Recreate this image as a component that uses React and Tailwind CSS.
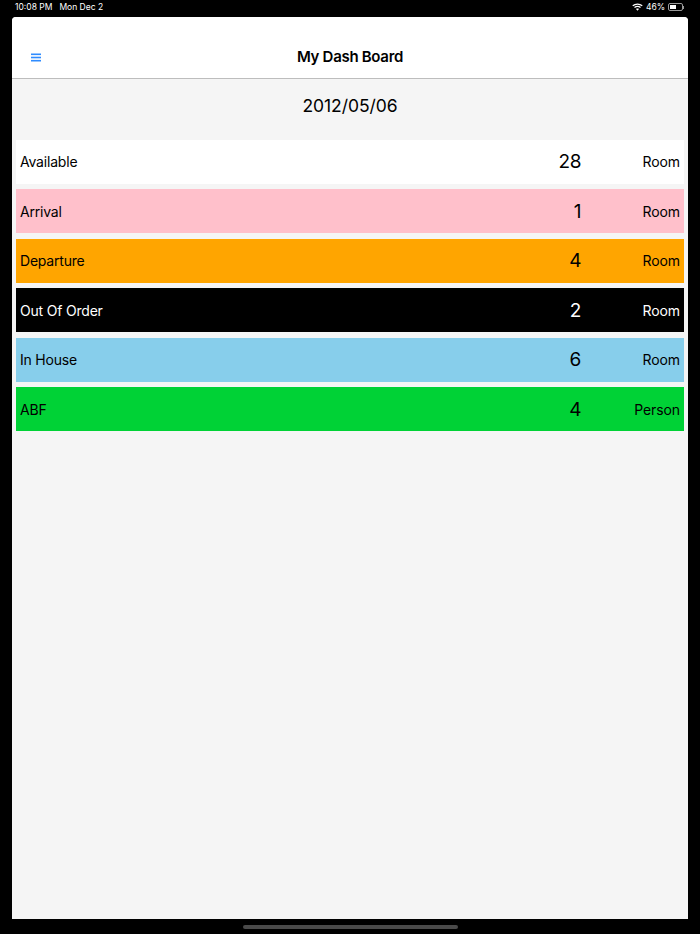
import React from 'react';

const rows = [
  { label: 'Available', count: 28, unit: 'Room', cls: 'bg-white text-black' },
  { label: 'Arrival', count: 1, unit: 'Room', cls: 'bg-[#ffc0cb] text-black' },
  { label: 'Departure', count: 4, unit: 'Room', cls: 'bg-[#ffa500] text-black' },
  { label: 'Out Of Order', count: 2, unit: 'Room', cls: 'bg-black text-white' },
  { label: 'In House', count: 6, unit: 'Room', cls: 'bg-[#87ceeb] text-black' },
  { label: 'ABF', count: 4, unit: 'Person', cls: 'bg-[#00d236] text-black' },
];

const StatusBar = () => (
  <div className="h-[17px] pl-[15px] pr-[16px] pb-[3px] flex items-center justify-between text-white text-[8.5px] leading-none">
    <div className="flex gap-[7px]">
      <span>10:08 PM</span>
      <span>Mon Dec 2</span>
    </div>
    <div className="flex items-center gap-[3px]">
      <svg width="11" height="8" viewBox="0 0 22 16" fill="none" stroke="#fff" strokeWidth="2.6">
        <path d="M1.5 5.5c5.4-4.6 13.6-4.6 19 0" />
        <path d="M5 9.2c3.4-2.9 8.6-2.9 12 0" />
        <path d="M11 15.5l-3-3.3c1.7-1.3 4.3-1.3 6 0z" fill="#fff" stroke="none" />
      </svg>
      <span>46%</span>
      <div className="flex items-center">
        <div className="w-[15px] h-[8px] border border-[#9a9a9a] rounded-[2px] p-[1px]">
          <div className="w-[6px] h-full bg-white" />
        </div>
        <div className="w-[1px] h-[3px] bg-[#9a9a9a]" />
      </div>
    </div>
  </div>
);

const App = () => {
  return (
    <div className="w-[700px] h-[934px] bg-black flex flex-col overflow-hidden font-['Inter',sans-serif]">
      <StatusBar />
      <div className="mx-[12px] h-[902px] bg-[#f5f5f5] rounded-t-[4px] overflow-hidden flex flex-col">
        <div className="relative h-[62px] shrink-0 bg-white border-b border-[#bdbdbd] flex items-end justify-center pb-[11px]">
          <svg className="absolute left-[19px] top-[36px]" width="10" height="9" viewBox="0 0 10 9" fill="#2f8cff">
            <rect x="0" y="0.5" width="10" height="1.6" />
            <rect x="0" y="3.7" width="10" height="1.6" />
            <rect x="0" y="6.9" width="10" height="1.6" />
          </svg>
          <span className="text-[15px] leading-[20px] font-semibold tracking-[-0.3px] text-black">My Dash Board</span>
        </div>
        <div className="h-[60.7px] shrink-0 flex items-center justify-center pb-[7px] text-[17.5px] tracking-[-0.05px] text-black">
          2012/05/06
        </div>
        <div className="px-[4px] flex flex-col gap-[5.5px]">
          {rows.map((row) => (
            <div key={row.label} className={`h-[44px] pl-[4px] pr-[4px] flex items-center ${row.cls}`}>
              <span className="flex-1 text-[14px] tracking-[-0.2px]">{row.label}</span>
              <span className="text-[19px] pt-[2px] tracking-[-0.4px] w-[60px] text-right">{row.count}</span>
              <span className="w-[99px] text-right text-[14px] tracking-[-0.1px]">{row.unit}</span>
            </div>
          ))}
        </div>
      </div>
      <div className="flex-1 flex items-center justify-center pt-[1px]">
        <div className="w-[215px] h-[4px] rounded-full bg-[#4a4a4a]" />
      </div>
    </div>
  );
};

export default App;
